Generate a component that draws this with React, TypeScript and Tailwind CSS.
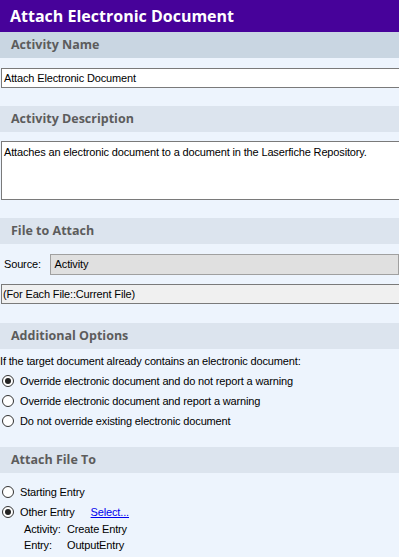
import React from "react";

const body = "font-['Liberation_Sans',Arial,sans-serif] text-[11px] tracking-[-0.15px] text-black";

function SectionHeader({ title, dark }: { title: string; dark?: boolean }) {
  return (
    <div
      className={`h-[26px] flex items-center pl-[11px] font-['Open_Sans',sans-serif] font-bold text-[12.5px] tracking-normal text-[#5c5c5c] ${
        dark ? "bg-[#c9d6e2]" : "bg-[#dce4ee]"
      }`}
    >
      {title}
    </div>
  );
}

function Radio({ checked, label }: { checked?: boolean; label: React.ReactNode }) {
  return (
    <div className="flex items-center h-[20px] pl-[2px]">
      <span className="w-[12px] h-[12px] rounded-full border border-[#333] bg-white flex items-center justify-center shrink-0">
        {checked ? <span className="w-[6px] h-[6px] rounded-full bg-[#222]" /> : null}
      </span>
      <span className="ml-[6px]">{label}</span>
    </div>
  );
}

export default function App() {
  return (
    <div className={`w-[399px] h-[557px] overflow-hidden bg-[#edf4fd] ${body}`}>
      <div className="h-[32px] bg-[#47029a] flex items-center pl-[10px] font-['Open_Sans',sans-serif] font-bold text-[16px] tracking-normal text-white">
        Attach Electronic Document
      </div>

      <SectionHeader title="Activity Name" dark />
      <div className="mt-[10px] ml-[1px] w-[420px] h-[20px] bg-white border border-[#7a7a7a] flex items-center pl-[2px]">
        Attach Electronic Document
      </div>

      <div className="mt-[18px]">
        <SectionHeader title="Activity Description" />
      </div>
      <div className="mt-[9px] ml-[1px] w-[420px] h-[59px] bg-white border border-[#7a7a7a] pl-[2px] pt-[2px]">
        Attaches an electronic document to a document in the Laserfiche Repository.
      </div>

      <div className="mt-[18px]">
        <SectionHeader title="File to Attach" />
      </div>
      <div className="mt-[10px] flex items-center h-[21px]">
        <span className="w-[51px] pl-[4px]">Source:</span>
        <div className="w-[360px] h-[21px] bg-[#e0e0e0] border border-[#a0a0a0] flex items-center pl-[4px]">
          Activity
        </div>
      </div>
      <div className="mt-[9px] ml-[1px] w-[420px] h-[20px] bg-[#f0f0f0] border border-[#7a7a7a] flex items-center pl-[1px]">
        (For Each File::Current File)
      </div>

      <div className="mt-[19px]">
        <SectionHeader title="Additional Options" />
      </div>
      <div className="mt-[2px] h-[20px] flex items-center">
        If the target document already contains an electronic document:
      </div>
      <div>
        <Radio checked label="Override electronic document and do not report a warning" />
        <Radio label="Override electronic document and report a warning" />
        <Radio label="Do not override existing electronic document" />
      </div>

      <div className="mt-[16px]">
        <SectionHeader title="Attach File To" />
      </div>
      <div className="mt-[9px]">
        <Radio label="Starting Entry" />
        <Radio
          checked
          label={
            <span className="flex">
              <span>Other Entry</span>
              <span className="ml-[16px] text-[#0000ee] underline">Select...</span>
            </span>
          }
        />
        <div className="-mt-[1px] pl-[24px] flex h-[16px] items-center">
          <span className="w-[43px]">Activity:</span>
          <span>Create Entry</span>
        </div>
        <div className="pl-[24px] flex h-[17px] items-center">
          <span className="w-[43px]">Entry:</span>
          <span>OutputEntry</span>
        </div>
      </div>
    </div>
  );
}
